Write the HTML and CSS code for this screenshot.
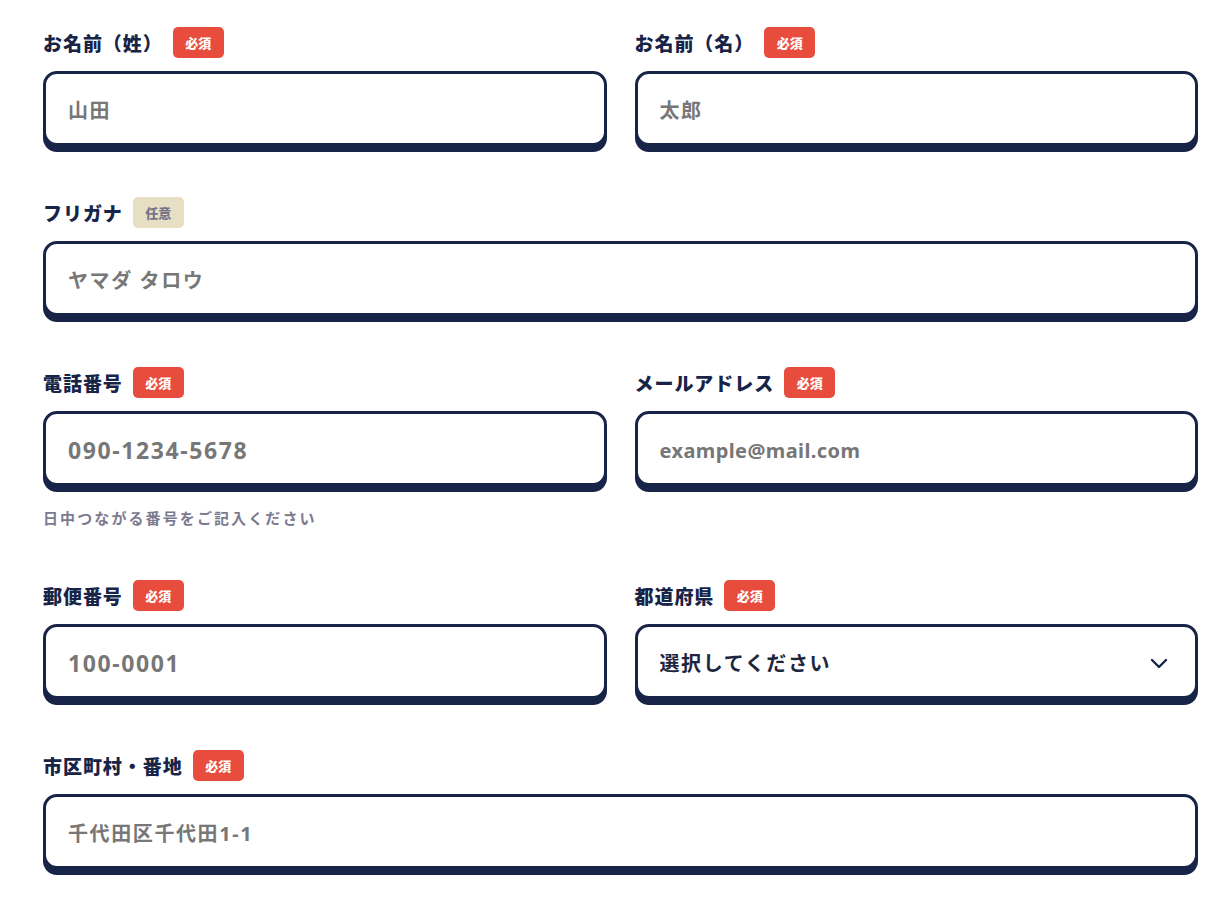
FILE: index.html
```html
<!DOCTYPE html>
<html lang="ja">
<head>
  <title>お問い合わせフォーム</title>
  <meta charset="UTF-8" />
  <link rel="stylesheet" href="styles.css">
</head>
<body>
  <form class="entry-form">
    <div class="field">
      <label class="field-label" for="last-name">お名前（姓）<span class="tag tag-required">必須</span></label>
      <input class="text-input" id="last-name" type="text" placeholder="山田">
    </div>
    <div class="field">
      <label class="field-label" for="first-name">お名前（名）<span class="tag tag-required">必須</span></label>
      <input class="text-input" id="first-name" type="text" placeholder="太郎">
    </div>

    <div class="field field-wide">
      <label class="field-label" for="kana">フリガナ<span class="tag tag-optional">任意</span></label>
      <input class="text-input" id="kana" type="text" placeholder="ヤマダ タロウ">
    </div>

    <div class="field">
      <label class="field-label" for="tel">電話番号<span class="tag tag-required">必須</span></label>
      <input class="text-input input-num" id="tel" type="tel" placeholder="090-1234-5678">
      <p class="hint">日中つながる番号をご記入ください</p>
    </div>
    <div class="field">
      <label class="field-label" for="email">メールアドレス<span class="tag tag-required">必須</span></label>
      <input class="text-input input-mail" id="email" type="email" placeholder="example@mail.com">
    </div>

    <div class="field">
      <label class="field-label" for="zip">郵便番号<span class="tag tag-required">必須</span></label>
      <input class="text-input input-num" id="zip" type="text" placeholder="100-0001">
    </div>
    <div class="field">
      <label class="field-label" for="pref">都道府県<span class="tag tag-required">必須</span></label>
      <div class="select-wrap">
        <select class="text-input select-input" id="pref">
          <option value="">選択してください</option>
          <option>東京都</option>
          <option>大阪府</option>
        </select>
        <svg class="select-arrow" width="18" height="12" viewBox="0 0 18 12" aria-hidden="true">
          <path d="M2 3l7 7 7-7" fill="none" stroke="#172447" stroke-width="2.4" stroke-linecap="round" stroke-linejoin="round"/>
        </svg>
      </div>
    </div>

    <div class="field field-wide">
      <label class="field-label" for="address">市区町村・番地<span class="tag tag-required">必須</span></label>
      <input class="text-input" id="address" type="text" placeholder="千代田区千代田1-1">
    </div>
  </form>
</body>
</html>
```

FILE: styles.css
```css
body {
  margin: 0;
  background: #fff;
  color: #172447;
  font-family: "Noto Sans", "Noto Sans CJK JP", sans-serif;
}

.entry-form {
  display: grid;
  grid-template-columns: 1fr 1fr;
  column-gap: 28px;
  row-gap: 51px;
  padding: 27px 32px 40px 43px;
}

.field {
  display: flex;
  flex-direction: column;
}

.field-wide {
  grid-column: 1 / -1;
}

.field-label {
  display: flex;
  align-items: center;
  gap: 10px;
  height: 31px;
  margin-bottom: 13px;
  font-size: 19px;
  font-weight: 900;
  letter-spacing: 0.05em;
  color: #172447;
}

.tag {
  display: inline-flex;
  align-items: center;
  justify-content: center;
  width: 51px;
  height: 31px;
  border-radius: 5px;
  font-size: 13px;
  font-weight: 900;
  letter-spacing: 0;
}

.tag-required {
  background: #e84c3d;
  color: #fff;
}

.tag-optional {
  background: #e6dfc3;
  color: #75758a;
}

.text-input {
  box-sizing: border-box;
  width: 100%;
  height: 75px;
  padding: 3px 22px 0;
  border: 3px solid #172447;
  border-radius: 14px;
  box-shadow: 0 6px 0 #172447;
  background: #fff;
  font-family: "Noto Sans", "Noto Sans CJK JP", sans-serif;
  font-size: 20px;
  font-weight: 700;
  letter-spacing: 0.08em;
  color: #172447;
  outline: none;
}

.text-input::placeholder {
  color: #777;
}

/* digits read small at 20px, so number fields get a bigger size */
.input-num {
  font-size: 23px;
  letter-spacing: 0.07em;
}

.input-mail {
  letter-spacing: 0.02em;
}

.select-wrap {
  position: relative;
}

.select-input {
  appearance: none;
  -webkit-appearance: none;
  font-weight: 600;
  color: #1d2640;
  cursor: pointer;
}

.select-arrow {
  position: absolute;
  right: 30px;
  top: 33px;
  pointer-events: none;
}

.hint {
  margin: 21px 0 0;
  font-size: 15px;
  line-height: 22px;
  font-weight: 700;
  letter-spacing: 0.14em;
  color: #7b7b8f;
}
```
